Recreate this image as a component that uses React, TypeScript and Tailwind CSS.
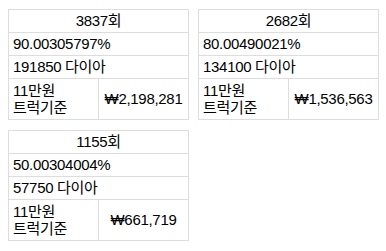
import React from "react";

type Card = { round: string; pct: string; dia: string; price: string };

const cards: Card[] = [
  { round: "3837회", pct: "90.00305797%", dia: "191850 다이아", price: "₩2,198,281" },
  { round: "2682회", pct: "80.00490021%", dia: "134100 다이아", price: "₩1,536,563" },
  { round: "1155회", pct: "50.00304004%", dia: "57750 다이아", price: "₩661,719" },
];

function CardView({ c }: { c: Card }) {
  return (
    <div className="w-[181px] border border-[#dddddd] flex flex-col">
      <div className="h-[23px] border-b border-[#dddddd] flex items-center justify-center">{c.round}</div>
      <div className="h-[23px] border-b border-[#dddddd] flex items-center pl-[4px]">{c.pct}</div>
      <div className="h-[23px] border-b border-[#dddddd] flex items-center pl-[4px]">{c.dia}</div>
      <div className="h-[40px] flex">
        <div className="w-[90px] border-r border-[#dddddd] flex flex-col justify-center pl-[4px] leading-[17px]">
          <span>11만원</span>
          <span>트럭기준</span>
        </div>
        <div className="flex-1 flex items-center justify-center">{c.price}</div>
      </div>
    </div>
  );
}

export default function App() {
  return (
    <div
      className="bg-white text-black w-[386px] h-[251px] pt-[9px] pl-[8px] flex flex-wrap gap-x-[9px] gap-y-[10px] content-start text-[15px] tracking-[-0.3px]"
      style={{ fontFamily: '"Liberation Sans", Arial, "Noto Sans CJK KR", sans-serif' }}
    >
      {cards.map((c) => (
        <CardView key={c.round} c={c} />
      ))}
    </div>
  );
}
